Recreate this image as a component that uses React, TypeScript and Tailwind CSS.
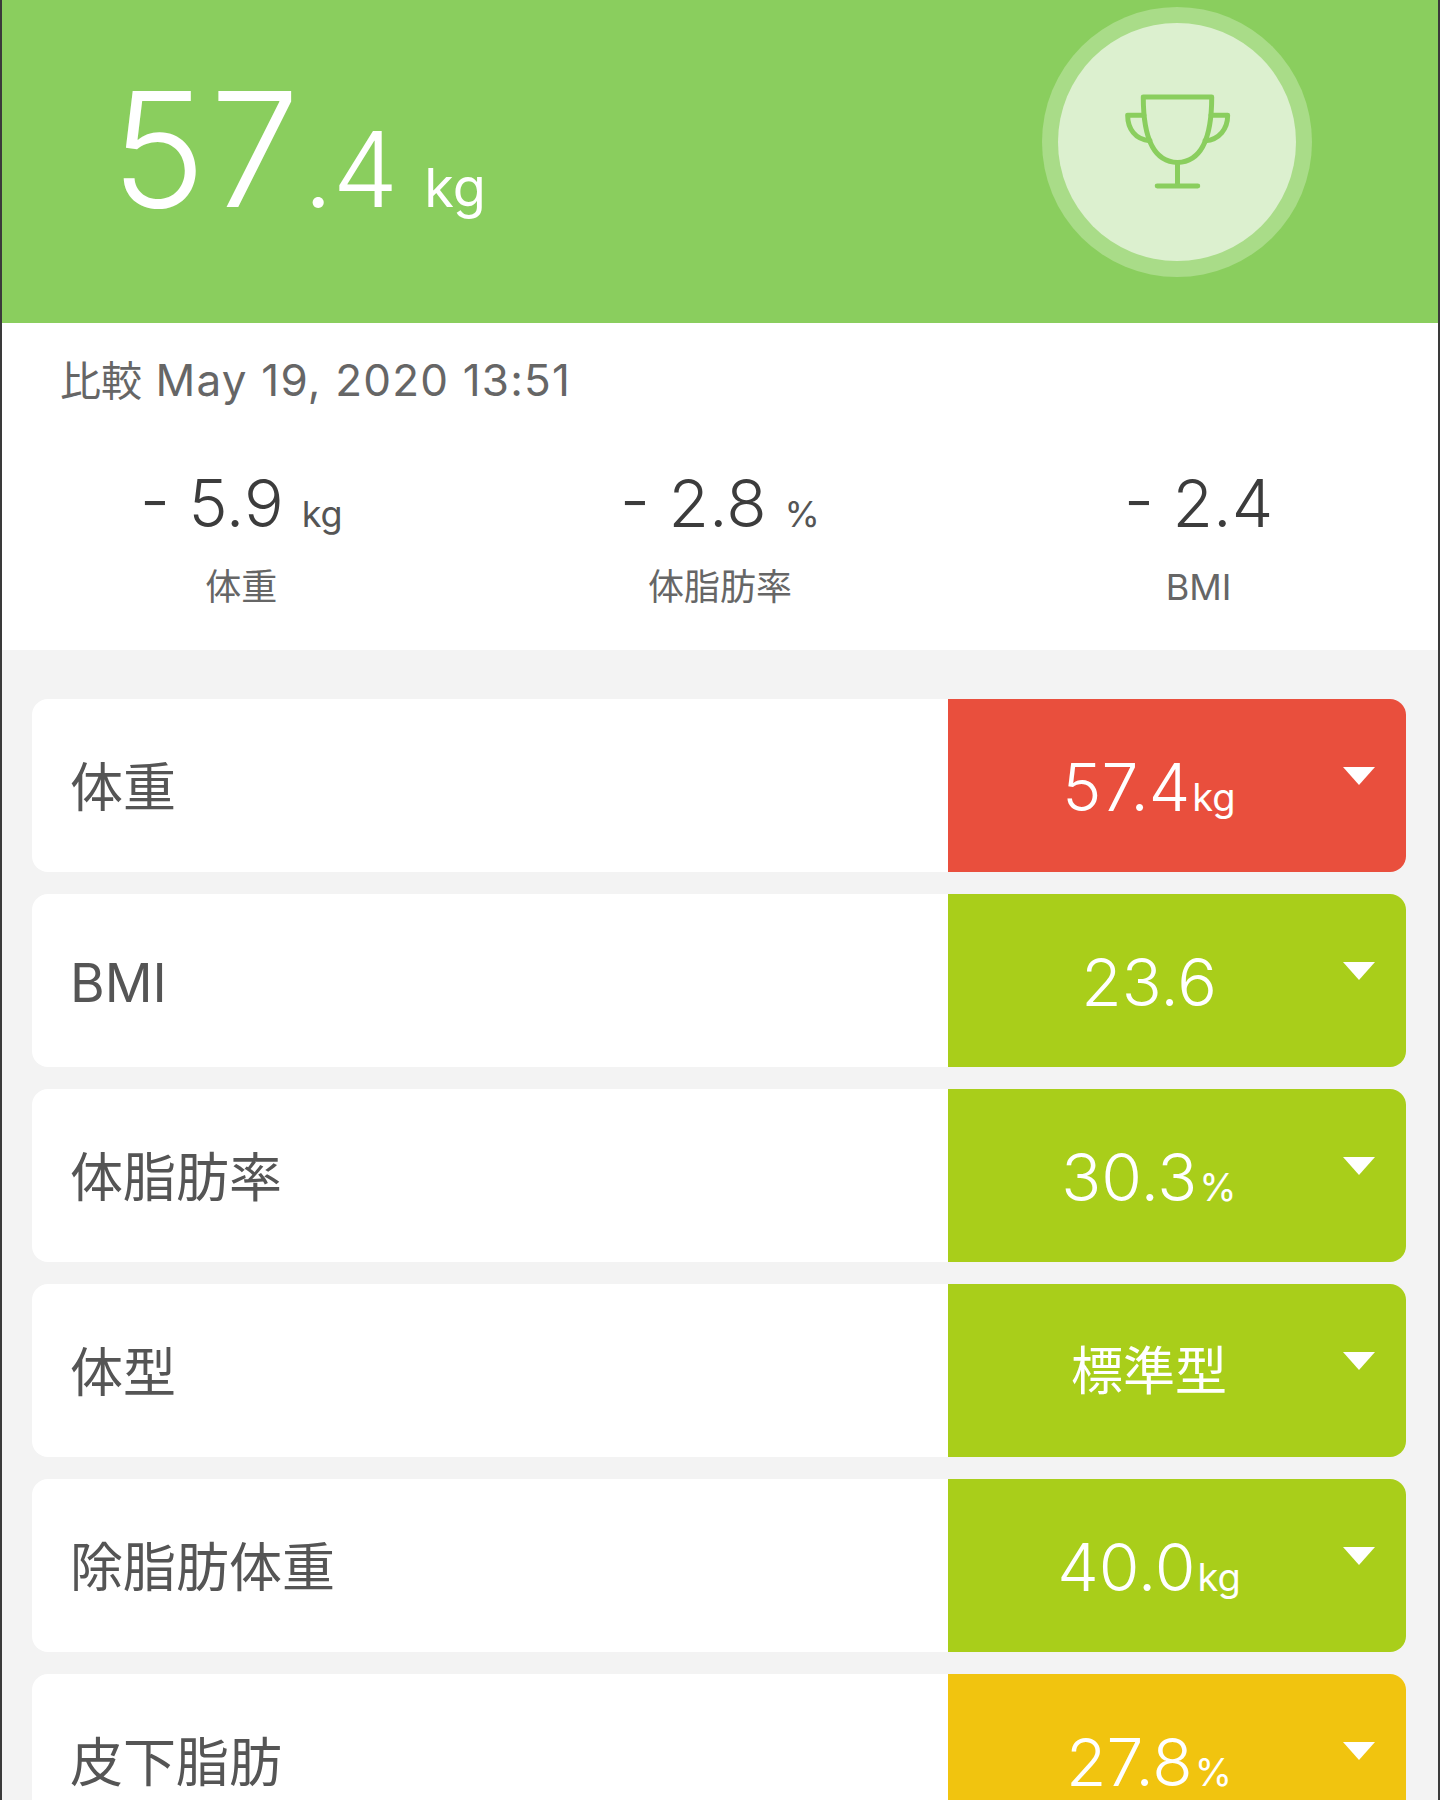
type Row = {
  label: string
  value: string
  unit?: string
  color: string
  cjk?: boolean
}

const rows: Row[] = [
  { label: '体重', value: '57.4', unit: 'kg', color: 'bg-[#e94f3d]' },
  { label: 'BMI', value: '23.6', color: 'bg-[#a9ce1a]' },
  { label: '体脂肪率', value: '30.3', unit: '%', color: 'bg-[#a9ce1a]' },
  { label: '体型', value: '標準型', color: 'bg-[#a9ce1a]', cjk: true },
  { label: '除脂肪体重', value: '40.0', unit: 'kg', color: 'bg-[#a9ce1a]' },
  { label: '皮下脂肪', value: '27.8', unit: '%', color: 'bg-[#f1c40f]' },
]

const stats = [
  { value: '- 5.9', unit: 'kg', label: '体重' },
  { value: '- 2.8', unit: '%', label: '体脂肪率' },
  { value: '- 2.4', unit: '', label: 'BMI' },
]

const Trophy = () => (
  <svg width="109" height="99" viewBox="370 278 326 298" fill="none" stroke="#8ace5e" strokeWidth="15" strokeLinecap="round" strokeLinejoin="round">
    <path d="M430 290H636C636 380 620 485 533 487C446 485 430 380 430 290Z" />
    <path d="M533 487V558M472 558H594" />
    <path d="M432 345H383C383 385 405 418 450 422" />
    <path d="M634 345H684C684 385 660 418 616 422" />
  </svg>
)

export default function App() {
  return (
    <div className="h-[1800px] overflow-hidden border-x-2 border-[#3a3a3a] bg-[#f3f3f3] font-[Inter,'Noto_Sans_CJK_JP',sans-serif]">
      <header className="flex h-[323px] items-start justify-between bg-[#8ace5e] pl-[109px] pr-[126px] text-white">
        <div className="mt-[69px] flex items-baseline font-light leading-none">
          <span className="text-[160px] tracking-[4px]">57</span>
          <span className="text-[104px]">.4</span>
          <span className="ml-[26px] text-[54px] font-normal">kg</span>
        </div>
        <div className="mt-[7px] flex size-[270px] items-center justify-center rounded-full bg-[#a9dc88]">
          <div className="flex size-[238px] items-center justify-center rounded-full bg-[#dcf0cf]">
            <Trophy />
          </div>
        </div>
      </header>

      <section className="h-[327px] bg-white pt-[31px]">
        <p className="pl-[58px] text-[44px] leading-[52px] font-normal tracking-[1.2px] text-[#666]">
          <span className="text-[41px] tracking-normal">比較</span> May 19, 2020 13:51
        </p>
        <div className="mt-[64px] grid grid-cols-3">
          {stats.map((s) => (
            <div key={s.label} className="text-center">
              <div className="flex h-[64px] items-baseline justify-center leading-[64px] text-[#3c3c3c]">
                <span className="text-[66px] font-light">{s.value}</span>
                {s.unit && <span className="ml-[18px] text-[36px] font-normal text-[#555]">{s.unit}</span>}
              </div>
              <div className="mt-[32px] h-[40px] text-[36px] leading-[40px] font-normal text-[#666]">{s.label}</div>
            </div>
          ))}
        </div>
      </section>

      <main className="flex flex-col gap-[22px] pt-[49px] pl-[30px] pr-[32px]">
        {rows.map((r) => (
          <div key={r.label} className="flex h-[173px] shrink-0 overflow-hidden rounded-[16px] bg-white">
            <div className="flex flex-1 items-center pt-[6px] pl-[38px] text-[53px] font-normal text-[#555]">{r.label}</div>
            <div className={`relative flex w-[458px] items-center justify-center pt-[2px] pr-[56px] text-white ${r.color}`}>
              {r.cjk ? (
                <span className="text-[52px] font-normal">{r.value}</span>
              ) : (
                <span className="flex items-baseline font-light">
                  <span className="text-[66px] leading-none">{r.value}</span>
                  {r.unit && <span className="ml-[2px] text-[38px] leading-none font-normal">{r.unit}</span>}
                </span>
              )}
              <span className="absolute top-[68px] right-[31px] h-0 w-0 border-x-[16px] border-t-[18px] border-x-transparent border-t-white" />
            </div>
          </div>
        ))}
      </main>
    </div>
  )
}
